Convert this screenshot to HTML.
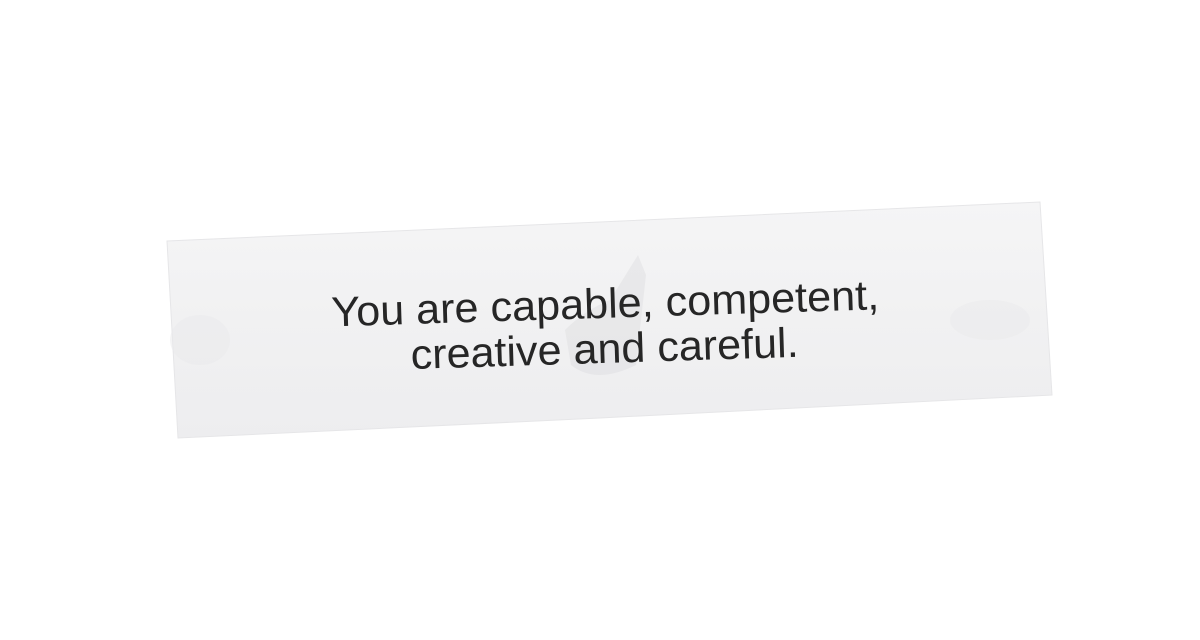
<!DOCTYPE html>
<html><head><style>
html,body{margin:0;padding:0;width:1200px;height:640px;background:#fff;overflow:hidden}
</style></head><body>
<svg width="1200" height="640" viewBox="0 0 1200 640">
<defs>
<linearGradient id="g" x1="0" y1="0" x2="0" y2="1">
<stop offset="0" stop-color="#f5f5f6"/><stop offset="0.5" stop-color="#f1f1f2"/><stop offset="1" stop-color="#ededef"/>
</linearGradient>
</defs>
<polygon points="167,241 600,222 1040,202 1052,395 600,418 178,438" fill="url(#g)" stroke="#e6e6e8" stroke-width="1"/>
<ellipse cx="200" cy="340" rx="30" ry="25" fill="#e9e9eb" opacity="0.5"/>
<ellipse cx="990" cy="320" rx="40" ry="20" fill="#eaeaec" opacity="0.5"/>
<path d="M565 330 q20 -20 45 -30 l28 -45 l8 20 l-10 90 q-40 20 -65 0 z" fill="#d8d8da" opacity="0.35"/>
<g fill="#262626" font-family="'Liberation Sans',Arial,sans-serif" font-size="42" text-anchor="middle" transform="rotate(-1.8 600 330)">
<text x="606" y="318" textLength="548" lengthAdjust="spacingAndGlyphs">You are capable, competent,</text>
<text x="604" y="363" textLength="388" lengthAdjust="spacingAndGlyphs">creative and careful.</text>
</g>
</svg>
</body></html>
